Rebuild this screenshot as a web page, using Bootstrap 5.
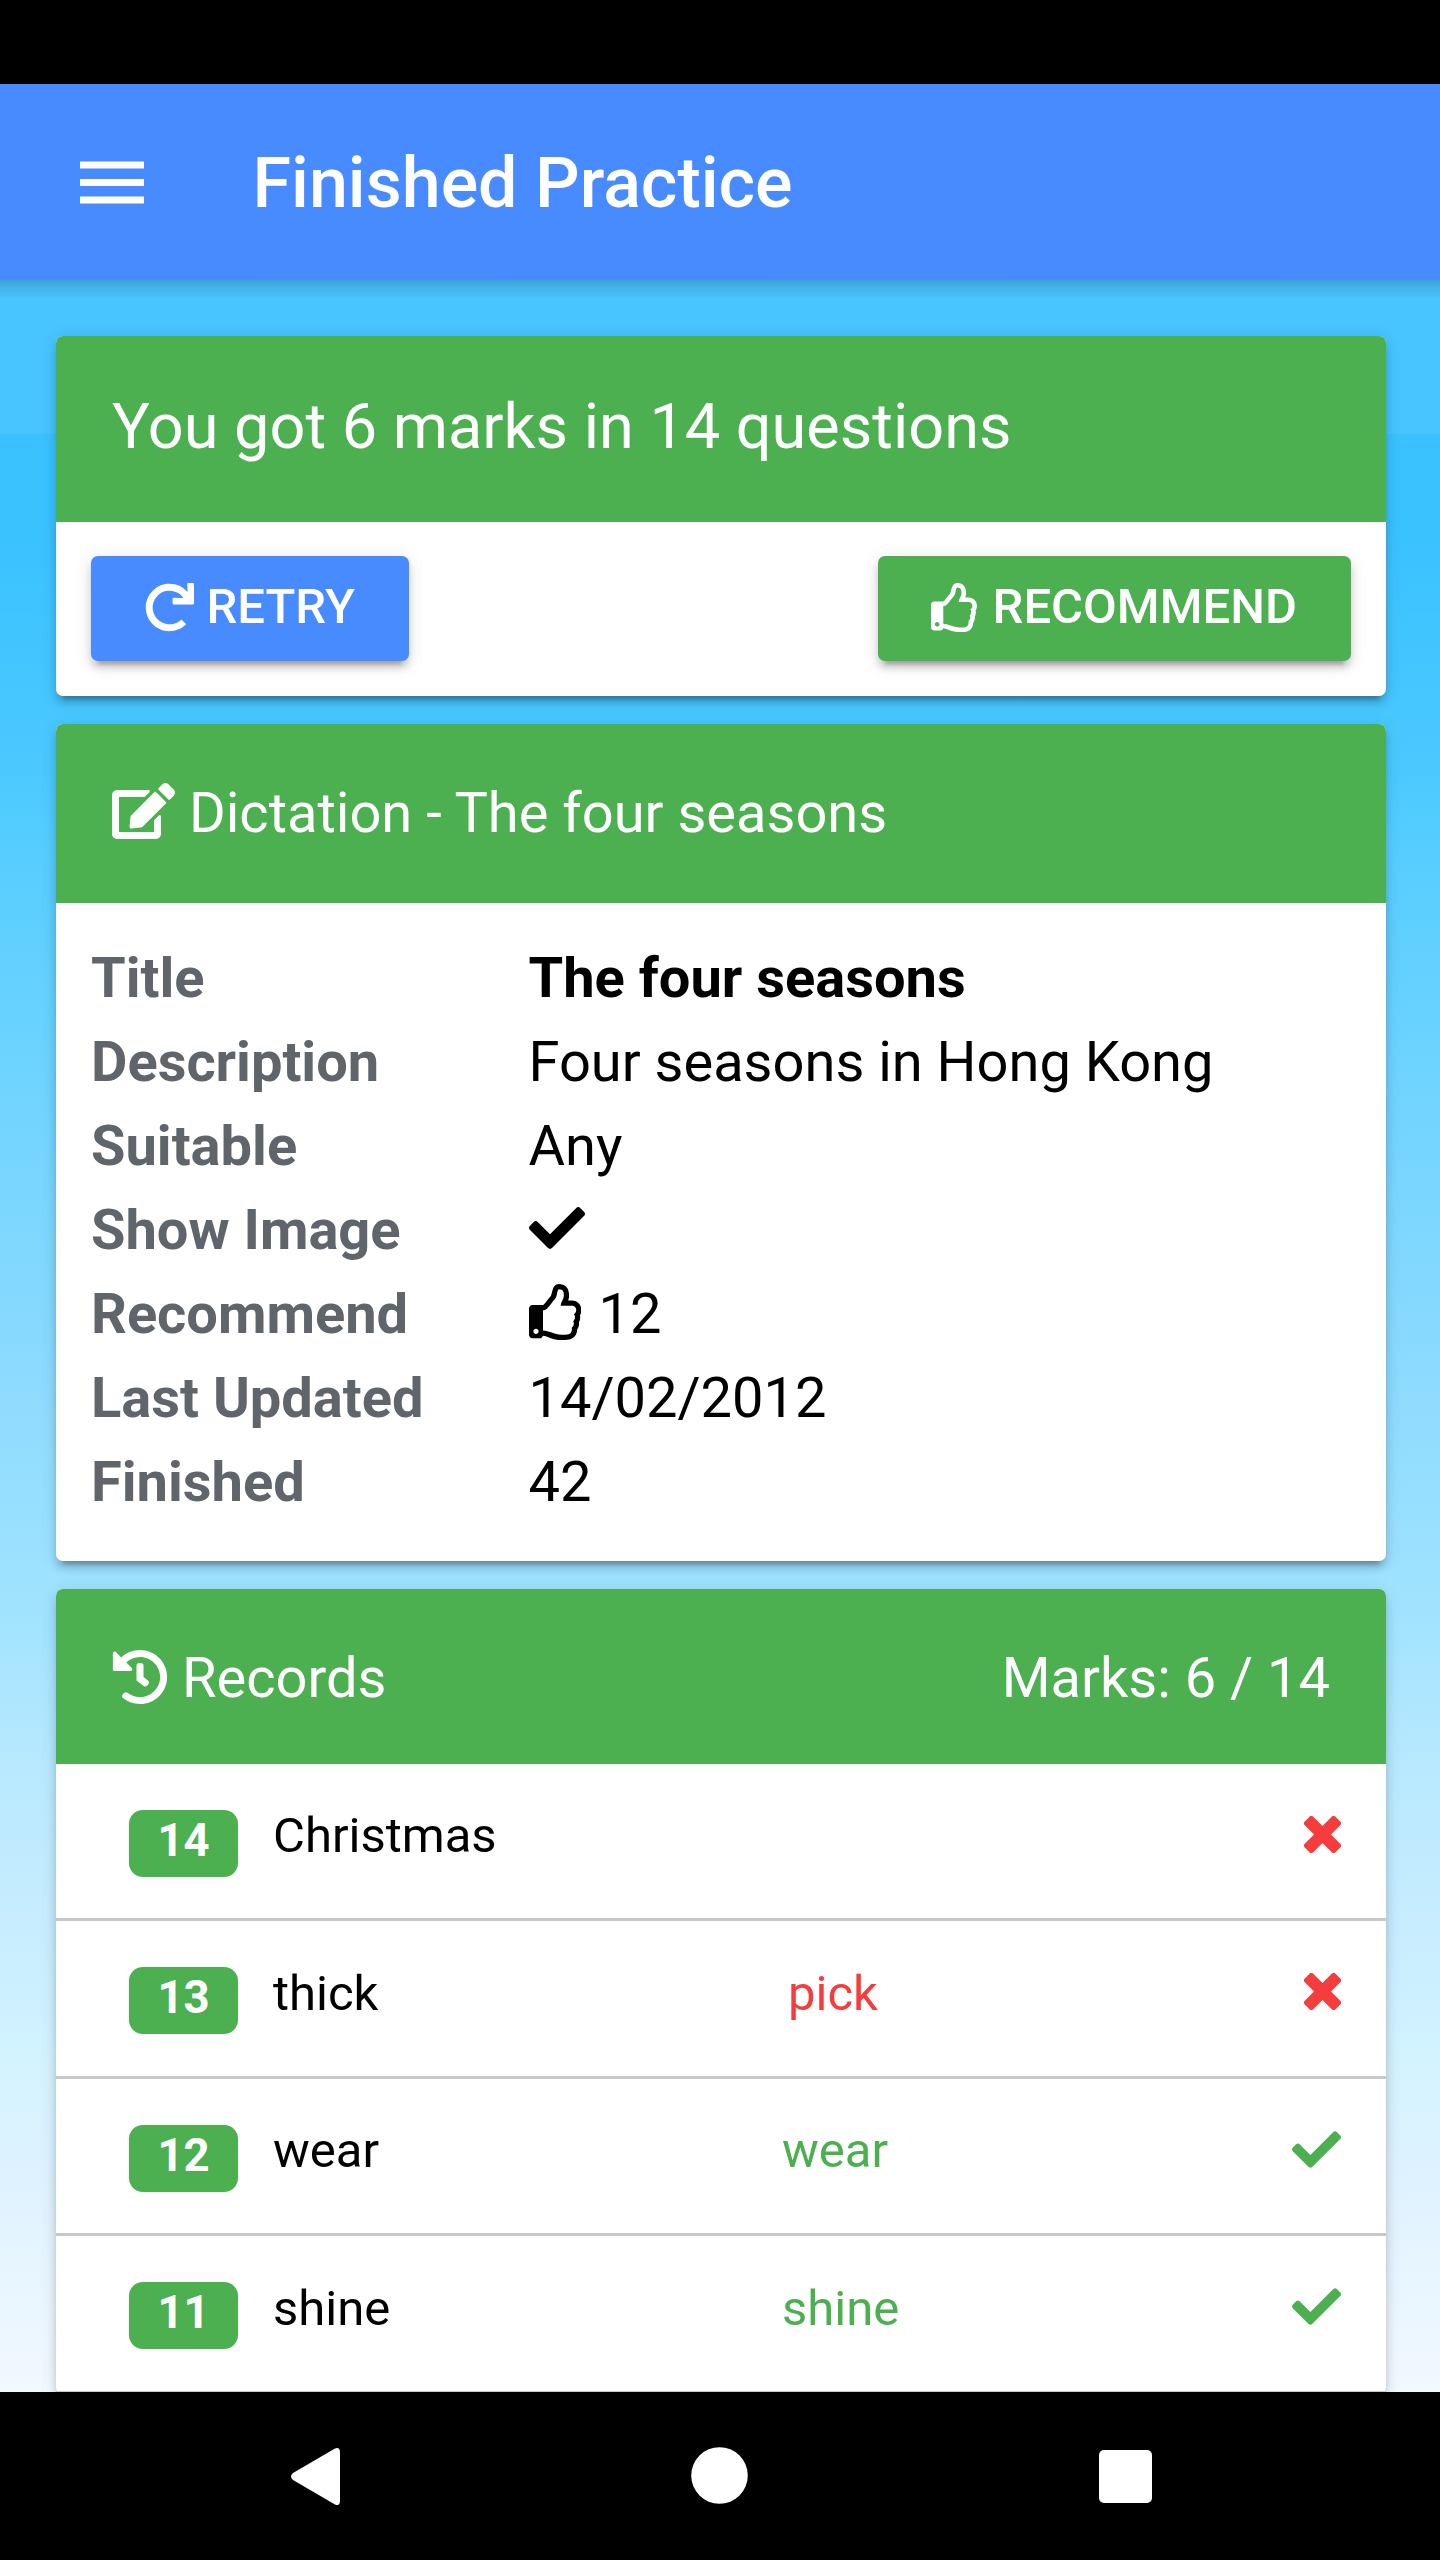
<!DOCTYPE html>
<html lang="en">
<head>
<meta charset="utf-8">
<meta name="viewport" content="width=device-width, initial-scale=1">
<title>Finished Practice</title>
<link rel="stylesheet" href="https://cdn.jsdelivr.net/npm/bootstrap@5.3.0/dist/css/bootstrap.min.css">
<style>
  :root { --app-green: #4caf50; --app-blue: #488aff; --app-red: #f53d3d; --app-line: #c8c7cc; }
  body { width: 1440px; height: 2560px; font-family: Roboto, sans-serif; font-size: 56px; line-height: 84px; color: #000; background: #fff; }
  svg { display: block; flex: none; fill: currentColor; }
  .status-strip { height: 84px; }
  .app-header { height: 196px; padding: 2px 80px 0; gap: 108.5px; background: var(--app-blue); }
  .app-title { font-size: 70px; font-weight: 500; line-height: 84px; }
  .app-content {
    padding: 56px 54px 0 56px; gap: 28px;
    background:
      linear-gradient(rgba(0,0,0,.18), rgba(0,0,0,.08) 8px, rgba(0,0,0,.02) 17px, transparent 18px) top / 100% 18px no-repeat,
      linear-gradient(#48c4ff 154px, #39c2ff 154px, #39c2ff 240px, #45c6ff 405px, #4bc9ff 490px, #55cdff 560px, #70d4ff 810px, #8bdaff 1081px, #9de2ff 1290px, #a3e4ff 1350px, #b8e9ff 1486px, #c8edff 1650px, #d3f3ff 1780px, #def2ff 1891px, #f2f9ff 2112px);
  }
  .panel { border: 0; border-radius: 7px; overflow: visible; box-shadow: 0 10.5px 3.5px -7px rgba(0,0,0,.2), 0 7px 7px rgba(0,0,0,.14), 0 3.5px 17.5px rgba(0,0,0,.12); }
  .panel-head { background: var(--app-green); border-radius: 7px 7px 0 0; padding: 0 56px; }
  .head-score { height: 185.5px; font-size: 63px; padding-bottom: 3px; }
  .head-info { height: 178.3px; gap: 14px; }
  .head-info svg { margin-bottom: 4px; }
  .head-records { height: 175px; padding-top: 4px; gap: 14px; }
  .head-records svg { margin-bottom: 3px; }
  .score-actions { height: 174.8px; padding: 0 35px; }
  .action-btn { height: 105px; gap: 12.5px; border: 0; border-radius: 7px; padding: 0 54px 2px; font-size: 49px; font-weight: 500; line-height: 1; color: #fff; box-shadow: 0 10.5px 3.5px -7px rgba(0,0,0,.2), 0 7px 7px rgba(0,0,0,.14), 0 3.5px 17.5px rgba(0,0,0,.12); }
  .action-btn span { padding-bottom: 3px; }
  .btn-retry { padding-right: 54.5px; background: var(--app-blue); }
  .btn-like { gap: 16px; padding-left: 53px; background: var(--app-green); }
  .info-body { height: 658.2px; padding: 33.8px 35px; }
  .info-label { width: 437.5px; font-weight: 700; color: #60646b; }
  .likes { gap: 17.5px; }
  .record-row { height: 157.5px; padding: 0 45.5px 0 73px; border-bottom: 3px solid var(--app-line); font-size: 49px; line-height: 58px; }
  .record-no { width: 109px; height: 67px; margin: 4px 35px 0 0; border-radius: 14px; background: var(--app-green); color: #fff; font-size: 45.5px; font-weight: 700; line-height: 61px; text-align: center; }
  .record-word { width: 509px; padding-bottom: 10px; }
  .record-answer { padding-bottom: 10px; }
  .record-mark { padding-bottom: 14px; }
  .is-right { color: var(--app-green); }
  .is-wrong { color: var(--app-red); }
  .answer-wrong { padding-left: 6px; }
  .system-nav { height: 168px; }
</style>
</head>
<body class="d-flex flex-column overflow-hidden">

<svg class="d-none" aria-hidden="true">
  <symbol id="i-thumb" viewBox="0 0 480 512"><path d="M466.27 286.69C475.04 271.84 480 256 480 236.85c0-44.015-37.218-85.58-85.82-85.58H357.7c4.92-12.81 8.85-28.13 8.85-46.54C366.55 31.936 328.86 0 271.28 0c-61.607 0-58.093 94.933-71.76 108.6-22.747 22.747-49.615 66.447-68.76 83.4H32c-17.673 0-32 14.327-32 32v240c0 17.673 14.327 32 32 32h64c14.893 0 27.408-10.174 30.978-23.95 44.509 1.001 75.06 39.94 177.802 39.94 7.22 0 15.22.01 22.22.01 77.117 0 111.986-39.423 112.94-95.33 13.319-18.425 20.299-43.122 17.34-66.99 9.854-18.452 13.664-40.343 8.99-62.99zm-61.75 53.83c12.56 21.13 1.26 49.41-13.94 57.57 7.7 48.78-17.608 65.9-53.12 65.9h-37.82c-71.639 0-118.029-37.82-171.64-37.82V240h10.92c28.36 0 67.98-70.89 94.54-97.46 28.36-28.36 18.91-75.63 37.82-94.54 47.27 0 47.27 32.98 47.27 56.73 0 39.17-28.36 56.72-28.36 94.54h103.99c21.11 0 37.73 18.91 37.82 37.82.09 18.9-12.82 37.81-22.27 37.81 13.489 14.555 16.371 45.236-5.21 65.62zM88 432c0 13.255-10.745 24-24 24s-24-10.745-24-24 10.745-24 24-24 24 10.745 24 24z"/></symbol>
  <symbol id="i-check" viewBox="0 0 512 512"><path d="M173.898 439.404l-166.4-166.4c-9.997-9.997-9.997-26.206 0-36.204l36.203-36.204c9.997-9.998 26.207-9.998 36.204 0L192 312.69 432.095 72.596c9.997-9.997 26.207-9.997 36.204 0l36.203 36.204c9.997 9.997 9.997 26.206 0 36.204l-294.4 294.401c-9.998 9.997-26.207 9.997-36.204-.001z"/></symbol>
  <symbol id="i-cross" viewBox="0 0 83 83"><g transform="rotate(45 41.5 41.5)"><rect x="-7.25" y="28" width="97.5" height="27" rx="6"/><rect x="28" y="-7.25" width="27" height="97.5" rx="6"/></g></symbol>
</svg>

<div class="status-strip bg-black flex-shrink-0"></div>

<header class="app-header d-flex align-items-center flex-shrink-0 text-white">
  <svg width="64" height="44" viewBox="0 0 64 44"><path d="M0 .5h64v7H0zM0 18h64v7H0zM0 35.5h64v7H0z"/></svg>
  <h1 class="app-title m-0">Finished Practice</h1>
</header>

<main class="app-content d-flex flex-column flex-grow-1 overflow-hidden">

  <section class="panel card flex-shrink-0">
    <div class="panel-head head-score d-flex align-items-center text-white">You got 6 marks in 14 questions</div>
    <div class="score-actions d-flex align-items-center justify-content-between">
      <button class="btn action-btn btn-retry d-flex align-items-center" type="button">
        <svg width="49" height="49" viewBox="0 0 512 512"><path d="M500.33 0h-47.41a12 12 0 0 0-12 12.57l4 82.76A247.42 247.42 0 0 0 256 8C119.34 8 7.9 119.53 8 256.19 8.1 393.07 119.1 504 256 504a247.1 247.1 0 0 0 166.18-63.91 12 12 0 0 0 .48-17.43l-34-34a12 12 0 0 0-16.38-.55A176 176 0 1 1 402.1 157.8l-101.53-4.87a12 12 0 0 0-12.57 12v47.41a12 12 0 0 0 12 12h200.33a12 12 0 0 0 12-12V12a12 12 0 0 0-12-12z"/></svg>
        <span>RETRY</span>
      </button>
      <button class="btn action-btn btn-like d-flex align-items-center" type="button">
        <svg width="46" height="49"><use href="#i-thumb"/></svg>
        <span>RECOMMEND</span>
      </button>
    </div>
  </section>

  <section class="panel card flex-shrink-0">
    <div class="panel-head head-info d-flex align-items-center text-white">
      <svg width="63" height="56" viewBox="0 0 576 512"><path d="M402.6 83.2l90.2 90.2c3.8 3.8 3.8 10 0 13.8L274.4 405.6l-92.8 10.3c-12.4 1.4-22.9-9.1-21.5-21.5l10.3-92.8L388.8 83.2c3.8-3.8 10-3.8 13.8 0zm162-22.9l-48.8-48.8c-15.2-15.2-39.9-15.2-55.2 0l-35.4 35.4c-3.8 3.8-3.8 10 0 13.8l90.2 90.2c3.8 3.8 10 3.8 13.8 0l35.4-35.4c15.2-15.3 15.2-40 0-55.2zM384 346.2V448H64V128h229.8c3.2 0 6.2-1.3 8.5-3.5l40-40c7.6-7.6 2.2-20.5-8.5-20.5H48C21.5 64 0 85.5 0 112v352c0 26.5 21.5 48 48 48h352c26.5 0 48-21.5 48-48V306.2c0-10.7-12.9-16-20.5-8.5l-40 40c-2.2 2.3-3.5 5.3-3.5 8.5z"/></svg>
      <span>Dictation - The four seasons</span>
    </div>
    <div class="info-body">
      <div class="d-flex"><div class="info-label">Title</div><div class="fw-bold">The four seasons</div></div>
      <div class="d-flex"><div class="info-label">Description</div><div>Four seasons in Hong Kong</div></div>
      <div class="d-flex"><div class="info-label">Suitable</div><div>Any</div></div>
      <div class="d-flex align-items-center"><div class="info-label">Show Image</div><svg class="mb-1" width="56" height="56"><use href="#i-check"/></svg></div>
      <div class="d-flex align-items-center"><div class="info-label">Recommend</div><div class="likes d-flex align-items-center"><svg class="mb-1" width="52.5" height="56"><use href="#i-thumb"/></svg><span>12</span></div></div>
      <div class="d-flex"><div class="info-label">Last Updated</div><div>14/02/2012</div></div>
      <div class="d-flex"><div class="info-label">Finished</div><div>42</div></div>
    </div>
  </section>

  <section class="panel card flex-shrink-0">
    <div class="panel-head head-records d-flex align-items-center text-white">
      <svg width="56" height="56" viewBox="0 0 512 512"><path d="M504 255.531c.253 136.64-111.18 248.372-247.82 248.468-59.015.042-113.223-20.53-155.822-54.911-11.077-8.94-11.905-25.541-1.839-35.607l11.267-11.267c8.609-8.609 22.353-9.551 31.891-1.984C173.062 425.135 212.781 440 256 440c101.705 0 184-82.311 184-184 0-101.705-82.311-184-184-184-48.814 0-93.149 18.969-126.068 49.932l50.754 50.754c10.08 10.08 2.941 27.314-11.313 27.314H24c-8.837 0-16-7.163-16-16V38.627c0-14.254 17.234-21.393 27.314-11.314l49.372 49.372C129.209 34.136 189.552 8 256 8c136.81 0 247.747 110.781 248 247.531zm-180.912 78.784l9.823-12.63c8.138-10.463 6.253-25.542-4.21-33.679L288 256.349V152c0-13.255-10.745-24-24-24h-16c-13.255 0-24 10.745-24 24v135.651l65.409 50.874c10.463 8.137 25.541 6.253 33.679-4.21z"/></svg>
      <span>Records</span>
      <span class="ms-auto">Marks: 6 / 14</span>
    </div>
    <div class="record-row d-flex align-items-center">
      <span class="record-no">14</span><span class="record-word">Christmas</span>
      <span class="record-mark is-wrong ms-auto"><svg width="37" height="37"><use href="#i-cross"/></svg></span>
    </div>
    <div class="record-row d-flex align-items-center">
      <span class="record-no">13</span><span class="record-word">thick</span>
      <span class="record-answer answer-wrong is-wrong">pick</span>
      <span class="record-mark is-wrong ms-auto"><svg width="37" height="37"><use href="#i-cross"/></svg></span>
    </div>
    <div class="record-row d-flex align-items-center">
      <span class="record-no">12</span><span class="record-word">wear</span>
      <span class="record-answer is-right">wear</span>
      <span class="record-mark is-right ms-auto"><svg width="49" height="49"><use href="#i-check"/></svg></span>
    </div>
    <div class="record-row d-flex align-items-center">
      <span class="record-no">11</span><span class="record-word">shine</span>
      <span class="record-answer is-right">shine</span>
      <span class="record-mark is-right ms-auto"><svg width="49" height="49"><use href="#i-check"/></svg></span>
    </div>
  </section>
</main>

<nav class="system-nav bg-black text-white flex-shrink-0">
  <svg width="1440" height="168" viewBox="0 0 1440 168">
    <path d="M335 56.5q5-2 5 4v48q0 6-5 4L293 88q-4-3.500 0-7z"/>
    <circle cx="719.5" cy="83.500" r="28.300"/>
    <rect x="1099" y="58" width="53" height="53" rx="5"/>
  </svg>
</nav>

<script src="https://cdn.jsdelivr.net/npm/bootstrap@5.3.0/dist/js/bootstrap.bundle.min.js"></script>
</body>
</html>
